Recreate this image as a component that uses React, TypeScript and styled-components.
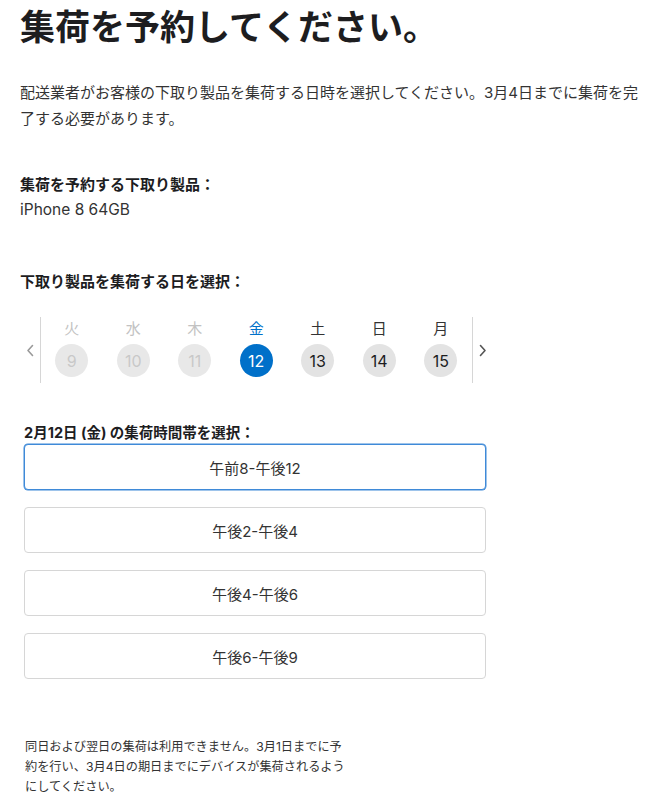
import React, { useState } from "react";
import styled, { createGlobalStyle, css } from "styled-components";

const GlobalStyle = createGlobalStyle`
  html, body {
    margin: 0;
    padding: 0;
    background: #ffffff;
  }
  body {
    font-family: "Inter", "Noto Sans CJK JP", sans-serif;
    color: #333333;
    -webkit-font-smoothing: antialiased;
  }
  * { box-sizing: border-box; }
`;

const Page = styled.main`
  padding: 0 20px;
  width: 664px;
`;

const Title = styled.h1`
  margin: 7px 0 0;
  font-size: 35px;
  line-height: 40px;
  font-weight: 700;
  color: #1d1d1f;
`;

const Intro = styled.p`
  margin: 33px 0 0;
  font-size: 15px;
  line-height: 26px;
  color: #333333;
`;

const ProductBlock = styled.section`
  margin-top: 39.5px;
`;

const Label = styled.div`
  font-size: 15px;
  line-height: 25px;
  font-weight: 700;
  color: #1d1d1f;
`;

const Value = styled.div`
  font-size: 15.5px;
  line-height: 25px;
  color: #333333;
`;

const DateHeading = styled(Label)`
  margin-top: 47px;
`;

const Calendar = styled.div`
  margin-top: 23.5px;
  display: flex;
  align-items: center;
  height: 66px;
`;

const Arrow = styled.button<{ $side: "left" | "right" }>`
  width: 20px;
  height: 66px;
  padding: 0;
  border: none;
  background: none;
  display: flex;
  align-items: center;
  justify-content: center;
  color: ${(p) => (p.$side === "left" ? "#9a9a9a" : "#555555")};
  cursor: pointer;
`;

const Days = styled.div`
  display: grid;
  grid-template-columns: repeat(7, 61.5px);
  height: 66px;
  border-left: 1px solid #d6d6d6;
  border-right: 1px solid #d6d6d6;
`;

type DayState = "disabled" | "enabled" | "selected";

const DayCol = styled.button`
  display: flex;
  flex-direction: column;
  align-items: center;
  padding: 1px 0 0;
  border: none;
  background: none;
  font-family: inherit;
  cursor: pointer;
`;

const DayName = styled.span<{ $state: DayState }>`
  font-size: 15px;
  line-height: 22px;
  margin-bottom: 4px;
  color: ${(p) =>
    p.$state === "disabled" ? "#c2c2c2" : p.$state === "selected" ? "#0070c9" : "#333333"};
`;

const DayCircle = styled.span<{ $state: DayState }>`
  width: 33px;
  height: 33px;
  border-radius: 50%;
  display: flex;
  align-items: center;
  justify-content: center;
  font-size: 16px;
  ${(p) =>
    p.$state === "disabled"
      ? css`
          background: #e8e8e8;
          color: #c8c8c8;
        `
      : p.$state === "selected"
      ? css`
          background: #0070c9;
          color: #ffffff;
        `
      : css`
          background: #e3e3e3;
          color: #1d1d1f;
        `}
`;

const SlotHeading = styled.div`
  margin-top: 40px;
  padding-left: 4px;
  font-size: 14.5px;
  line-height: 20px;
  font-weight: 700;
  color: #1d1d1f;
`;

const SlotList = styled.div`
  margin-top: 1px;
  margin-left: 4px;
  width: 462px;
  display: flex;
  flex-direction: column;
  gap: 17px;
`;

const SlotButton = styled.button<{ $active: boolean }>`
  height: 46px;
  width: 100%;
  border-radius: 4px;
  background: #ffffff;
  font-family: inherit;
  font-size: 15px;
  color: #333333;
  cursor: pointer;
  border: 1px solid ${(p) => (p.$active ? "#3f8ad8" : "#d6d6d6")};
  box-shadow: ${(p) => (p.$active ? "0 0 0 0.5px #3f8ad8" : "none")};
`;

const Footnote = styled.p`
  margin: 57.7px 0 0;
  padding-left: 5px;
  width: 329px;
  font-size: 12.2px;
  line-height: 20px;
  color: #333333;
`;

const Chevron = ({ dir }: { dir: "left" | "right" }) => (
  <svg width="8" height="13" viewBox="0 0 8 13" fill="none">
    <path
      d={dir === "left" ? "M6.5 1.5 L2 6.5 L6.5 11.5" : "M1.5 1.5 L6 6.5 L1.5 11.5"}
      stroke="currentColor"
      strokeWidth="1.6"
      strokeLinecap="round"
      strokeLinejoin="round"
    />
  </svg>
);

const days: { name: string; num: number; state: DayState }[] = [
  { name: "火", num: 9, state: "disabled" },
  { name: "水", num: 10, state: "disabled" },
  { name: "木", num: 11, state: "disabled" },
  { name: "金", num: 12, state: "selected" },
  { name: "土", num: 13, state: "enabled" },
  { name: "日", num: 14, state: "enabled" },
  { name: "月", num: 15, state: "enabled" },
];

const slots = ["午前8-午後12", "午後2-午後4", "午後4-午後6", "午後6-午後9"];

export default function App() {
  const [active, setActive] = useState(0);
  return (
    <>
      <GlobalStyle />
      <Page>
        <Title>集荷を予約してください。</Title>
        <Intro>
          配送業者がお客様の下取り製品を集荷する日時を選択してください。3月4日までに集荷を完了する必要があります。
        </Intro>
        <ProductBlock>
          <Label>集荷を予約する下取り製品：</Label>
          <Value>iPhone 8 64GB</Value>
        </ProductBlock>
        <DateHeading>下取り製品を集荷する日を選択：</DateHeading>
        <Calendar>
          <Arrow $side="left" aria-label="前へ">
            <Chevron dir="left" />
          </Arrow>
          <Days>
            {days.map((d) => (
              <DayCol key={d.num}>
                <DayName $state={d.state}>{d.name}</DayName>
                <DayCircle $state={d.state}>{d.num}</DayCircle>
              </DayCol>
            ))}
          </Days>
          <Arrow $side="right" aria-label="次へ">
            <Chevron dir="right" />
          </Arrow>
        </Calendar>
        <SlotHeading>2月12日 (金) の集荷時間帯を選択：</SlotHeading>
        <SlotList>
          {slots.map((s, i) => (
            <SlotButton key={s} $active={i === active} onClick={() => setActive(i)}>
              {s}
            </SlotButton>
          ))}
        </SlotList>
        <Footnote>
          同日および翌日の集荷は利用できません。3月1日までに予約を行い、3月4日の期日までにデバイスが集荷されるようにしてください。
        </Footnote>
      </Page>
    </>
  );
}
